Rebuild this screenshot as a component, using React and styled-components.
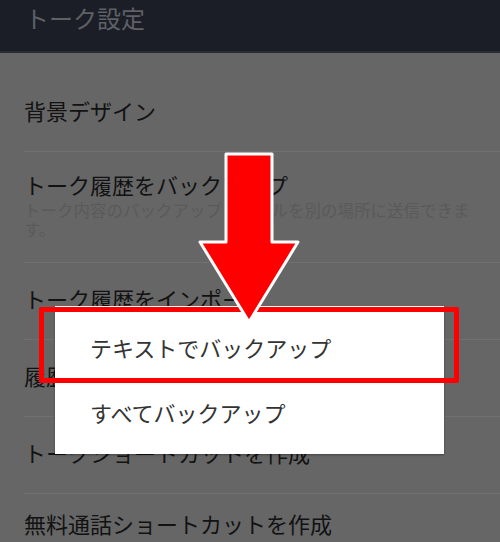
import styled, { createGlobalStyle } from "styled-components";

const GlobalStyle = createGlobalStyle`
  html, body {
    margin: 0;
    padding: 0;
    background: #666666;
  }
  body {
    font-family: "Noto Sans CJK JP", "Noto Sans", sans-serif;
  }
`;

const Screen = styled.div`
  position: relative;
  width: 500px;
  height: 542px;
  overflow: hidden;
  background: #666666;
`;

const Header = styled.header`
  height: 51px;
  background: #1b1e27;
  border-bottom: 2px solid #2a2d31;
  padding: 0 25px;
  box-sizing: content-box;
`;

const Title = styled.h1`
  margin: 0;
  font-size: 24px;
  font-weight: 400;
  line-height: 36px;
  color: #5e6166;
`;

const List = styled.ul`
  list-style: none;
  margin: 0;
  padding: 22px 0 0;
`;

const Item = styled.li`
  display: flex;
  flex-direction: column;
  justify-content: center;
  box-sizing: border-box;
  height: ${({ $height }) => $height || 77}px;
  margin-left: 24px;
  padding: 0 24px 6px 0;
  &:not(:last-child) {
    border-bottom: 1px solid #707070;
  }
`;

const ItemTitle = styled.span`
  font-size: 22px;
  line-height: 30px;
  color: #121212;
`;

const ItemSub = styled.span`
  font-size: 16.5px;
  line-height: 19px;
  color: #5a5a5a;
  margin-top: 2px;
`;

const Dialog = styled.div`
  position: absolute;
  left: 55px;
  top: 306px;
  width: 389px;
  height: 148px;
  box-sizing: border-box;
  padding: 8px 0 10px;
  background: #ffffff;
  box-shadow: 0 1px 2px rgba(0, 0, 0, 0.35);
`;

const Option = styled.div`
  height: 65px;
  display: flex;
  align-items: center;
  padding-left: 35px;
  font-size: 22px;
  color: #333333;
`;

const Highlight = styled.div`
  position: absolute;
  left: 39px;
  top: 307px;
  width: 420px;
  height: 76px;
  box-sizing: border-box;
  border: 5px solid #ff0000;
  border-radius: 2px;
  pointer-events: none;
`;

const ArrowLayer = styled.svg`
  position: absolute;
  left: 0;
  top: 0;
  width: 500px;
  height: 542px;
  pointer-events: none;
`;

const rows = [
  { title: "背景デザイン" },
  {
    title: "トーク履歴をバックアップ",
    sub: "トーク内容のバックアップファイルを別の場所に送信できます。",
    height: 111,
  },
  { title: "トーク履歴をインポート" },
  { title: "履歴をすべて削除" },
  { title: "トークショートカットを作成" },
  { title: "無料通話ショートカットを作成", height: 64 },
];

export default function App() {
  return (
    <Screen>
      <GlobalStyle />
      <Header>
        <Title>トーク設定</Title>
      </Header>
      <List>
        {rows.map((row) => (
          <Item key={row.title} $height={row.height}>
            <ItemTitle>{row.title}</ItemTitle>
            {row.sub && <ItemSub>{row.sub}</ItemSub>}
          </Item>
        ))}
      </List>

      <Dialog>
        <Option>テキストでバックアップ</Option>
        <Option>すべてバックアップ</Option>
      </Dialog>
      <Highlight />

      <ArrowLayer viewBox="0 0 500 542">
        <polygon
          points="226,154 272,154 272,242 298,242 249,322 200,242 226,242"
          fill="#ff0000"
          stroke="#ffffff"
          strokeWidth="3"
          strokeLinejoin="round"
        />
      </ArrowLayer>
    </Screen>
  );
}
